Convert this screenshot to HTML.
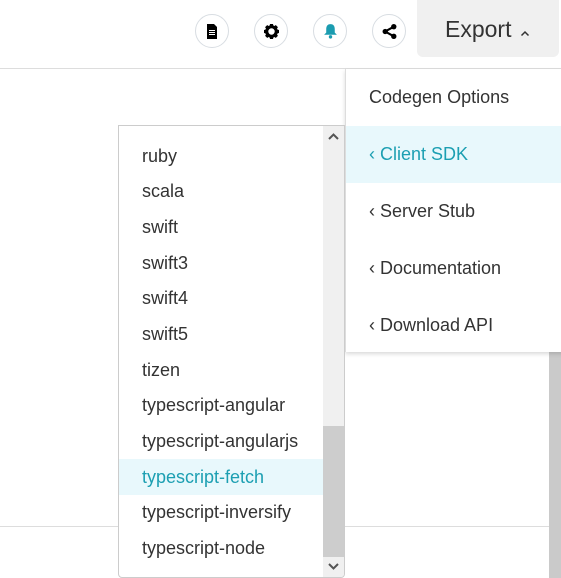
<!DOCTYPE html>
<html><head><style>
*{margin:0;padding:0;box-sizing:border-box}
body{width:561px;height:578px;overflow:hidden;background:#fff;font-family:"Liberation Sans",sans-serif;position:relative}
.circ{position:absolute;top:14px;width:34px;height:34px;border:1px solid #d8dde2;border-radius:50%;display:flex;align-items:center;justify-content:center}
.exp{position:absolute;left:417px;top:0;width:142px;height:57px;background:#f0f0f0;border-radius:0 0 6px 6px;color:#333;font-size:23px;padding:16px 0 0 28px}
.hl{position:absolute;background:#e0e0e0}
.dd{position:absolute;left:345px;top:69px;width:230px;height:283px;background:#fff;border-left:1px solid #ddd;box-shadow:0 2px 4px rgba(0,0,0,.15)}
.dd div{position:absolute;left:0;width:230px;height:57px;font-size:18px;color:#333;padding-left:23px;line-height:57px}
.list{position:absolute;left:118px;top:125px;width:227px;height:453px;border:1px solid #ccc;border-radius:0 0 4px 4px;overflow:hidden;background:#fff}
.list div.i{position:absolute;left:0;width:205px;height:36px;line-height:36px;padding-left:23px;font-size:18px;color:#333}
.sb{position:absolute;left:204px;top:0;width:21px;height:453px;background:#f0f0f0}
</style></head><body>
<div class="hl" style="left:0;top:68px;width:561px;height:1px;background:#ddd"></div>
<div class="hl" style="left:0;top:526px;width:549px;height:1px;background:#ddd"></div>
<div class="hl" style="left:549px;top:352px;width:12px;height:226px;background:#cacaca"></div>

<div class="circ" style="left:195px"><svg width="12" height="15" viewBox="0 0 12 15"><path d="M1 0h7l3 3v12H1z" fill="#000"/><path d="M3 6.5h6M3 8.5h6M3 10.5h6" stroke="#fff" stroke-width="1"/></svg></div>
<div class="circ" style="left:254px"><svg width="15" height="15" viewBox="0 0 14 14"><circle cx="7" cy="7" r="4.5" fill="none" stroke="#000" stroke-width="3"/><g stroke="#000" stroke-width="3"><path d="M7 0v3M7 11v3M0 7h3M11 7h3M2 2l2 2M10 10l2 2M2 12l2-2M10 4l2-2"/></g></svg></div>
<div class="circ" style="left:313px"><svg width="15" height="16" viewBox="0 0 14 15"><path d="M7 1c-3 0-4 2-4 5v3l-2 2h12l-2-2V6c0-3-1-5-4-5z" fill="#1b9cb0"/><circle cx="7" cy="13" r="1.6" fill="#1b9cb0"/></svg></div>
<div class="circ" style="left:372px"><svg width="15" height="15" viewBox="0 0 14 14"><circle cx="11" cy="2.5" r="2.5"/><circle cx="3" cy="7" r="2.5"/><circle cx="11" cy="11.5" r="2.5"/><path d="M11 2.5L3 7l8 4.5" stroke="#000" stroke-width="2" fill="none"/></svg></div>
<div class="exp">Export <svg width="10" height="7" style="margin-left:2px"><path d="M1.5 5.5L5 2l3.5 3.5" stroke="#333" stroke-width="1.5" fill="none"/></svg></div>

<div class="dd">
<div style="top:0">Codegen Options</div>
<div style="top:57px;background:#e8f8fc;color:#1c9fb2">‹ Client SDK</div>
<div style="top:114px">‹ Server Stub</div>
<div style="top:171px">‹ Documentation</div>
<div style="top:228px">‹ Download API</div>
</div>

<div class="list">
<div class="i" style="top:12px">ruby</div>
<div class="i" style="top:47px">scala</div>
<div class="i" style="top:83px">swift</div>
<div class="i" style="top:119px">swift3</div>
<div class="i" style="top:154px">swift4</div>
<div class="i" style="top:190px">swift5</div>
<div class="i" style="top:226px">tizen</div>
<div class="i" style="top:261px">typescript-angular</div>
<div class="i" style="top:297px">typescript-angularjs</div>
<div class="i" style="top:333px;background:#e8f8fc;color:#1c9fb2">typescript-fetch</div>
<div class="i" style="top:368px">typescript-inversify</div>
<div class="i" style="top:404px">typescript-node</div>
<div class="sb">
<div style="position:absolute;left:0;top:300px;width:21px;height:131px;background:#cdcdcd"></div>
<svg style="position:absolute;left:5px;top:7px" width="11" height="7"><path d="M1 6l4.5-4.5L10 6" stroke="#555" stroke-width="2" fill="none"/></svg>
<svg style="position:absolute;left:5px;top:437px" width="11" height="7"><path d="M1 1l4.5 4.5L10 1" stroke="#555" stroke-width="2" fill="none"/></svg>
</div>
</div>
</body></html>
